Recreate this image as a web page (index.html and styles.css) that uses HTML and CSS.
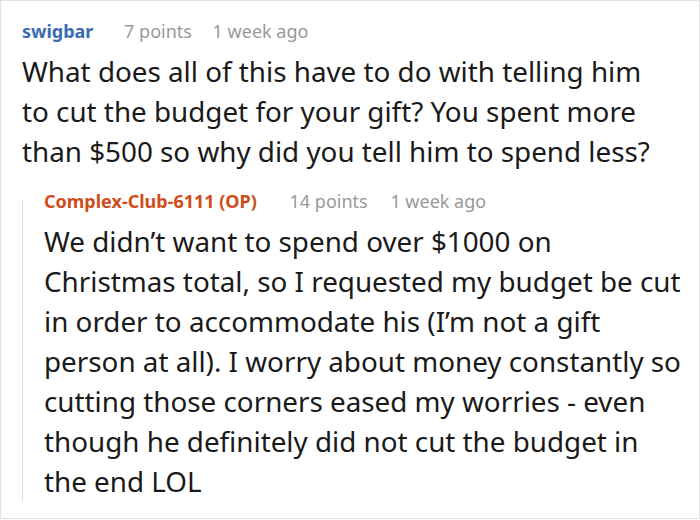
FILE: index.html
```html
<!DOCTYPE html>
<html>
<head>
<meta charset="utf-8">
<link rel="stylesheet" href="styles.css">
</head>
<body>
<div class="card">
  <div class="comment">
    <div class="meta">
      <span class="author">swigbar</span>
      <span class="points">7 points</span>
      <span class="time">1 week ago</span>
    </div>
    <p class="text top-text">What does all of this have to do with telling him to cut the budget for your gift? You spent more than $500 so why did you tell him to spend less?</p>
    <div class="reply">
      <div class="thread-line"></div>
      <div class="reply-body">
        <div class="meta">
          <span class="author op">Complex-Club-6111 (OP)</span>
          <span class="points">14 points</span>
          <span class="time">1 week ago</span>
        </div>
        <p class="text">We didn’t want to spend over $1000 on Christmas total, so I requested my budget be cut in order to accommodate his (I’m not a gift person at all). I worry about money constantly so cutting those corners eased my worries - even though he definitely did not cut the budget in the end LOL</p>
      </div>
    </div>
  </div>
</div>
</body>
</html>
```
FILE: styles.css
```css
html, body {
  margin: 0;
  padding: 0;
  background: #fff;
}
.card {
  width: 700px;
  height: 519px;
  box-sizing: border-box;
  border: 1px solid #e2e2e2;
  font-family: "Noto Sans", sans-serif;
  color: #1a1a1a;
  padding: 19px 12px 0 21px;
  overflow: hidden;
}
.meta {
  font-size: 18px;
  line-height: 22px;
  white-space: nowrap;
}
.author {
  font-weight: bold;
  color: #3a6cb4;
}
.author.op {
  color: #cf4d1b;
}
.points {
  color: #999;
  margin-left: 26px;
}
.reply .points {
  margin-left: 28px;
}
.time {
  color: #999;
  margin-left: 16px;
}
.reply .time {
  margin-left: 18px;
}
.text {
  margin: 9px 0 0 0;
  font-size: 27.8px;
  line-height: 40px;
}
.top-text {
  max-width: 630px;
}
.reply {
  margin-top: 19px;
  display: flex;
}
.thread-line {
  width: 1px;
  flex: none;
  background: #e0e0e0;
  margin: 10px 21px 0 0;
}
.reply-body {
  flex: 1;
}
```
